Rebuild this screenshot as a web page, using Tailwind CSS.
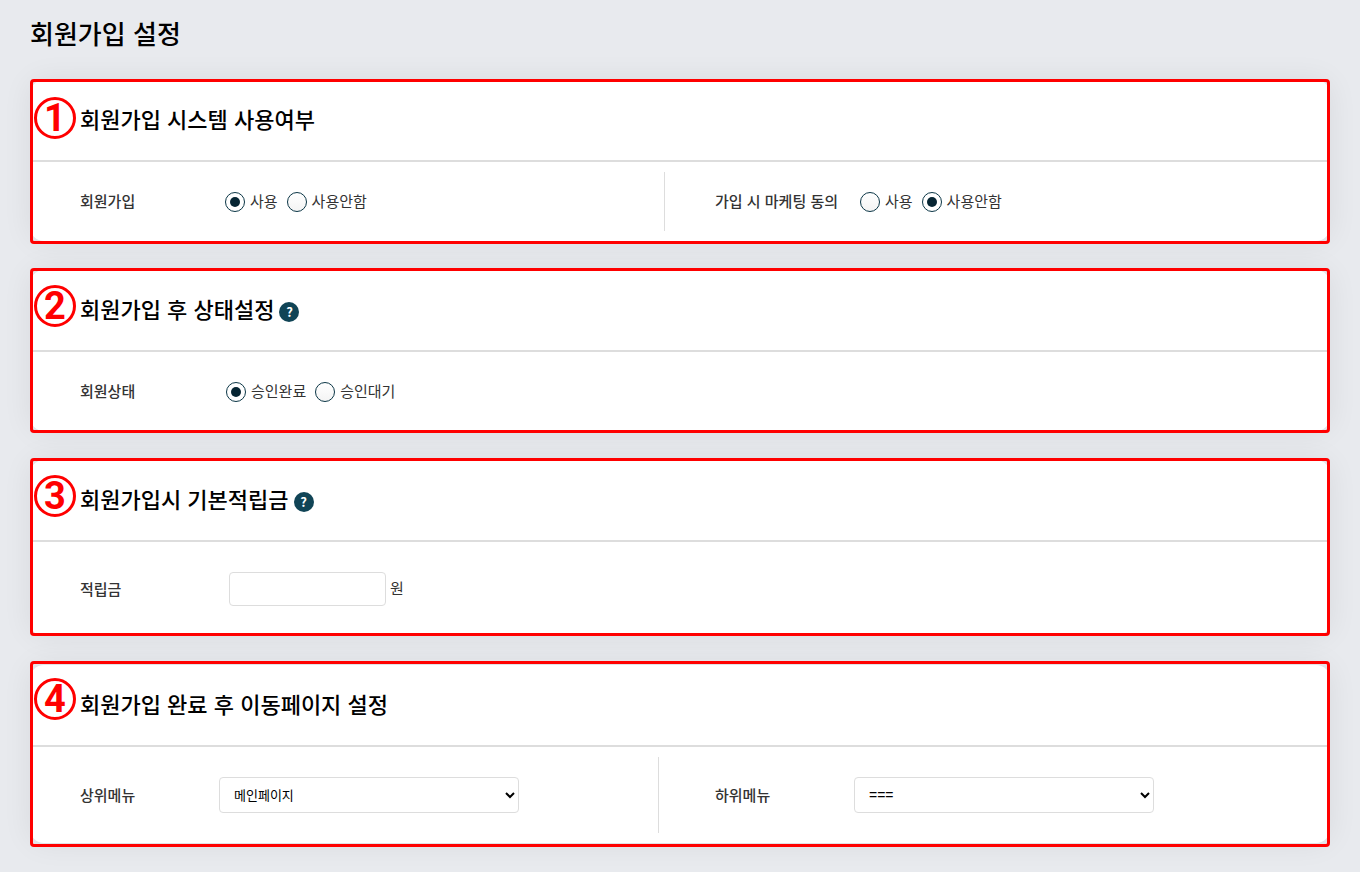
<!DOCTYPE html>
<html lang="ko">
  <head>
    <meta charset="UTF-8" />
    <meta name="viewport" content="width=device-width, initial-scale=1.0" />
    <script src="https://cdn.jsdelivr.net/npm/@tailwindcss/browser@4"></script>
    <title>회원가입 설정</title>
  </head>
  <body class="bg-[#e8eaee] font-['Noto_Sans_CJK_KR',sans-serif] text-[15px] leading-[18px] text-[#333]">
    <main class="px-[30px] pb-[25px]">
      <h1 class="flex h-20 items-start pt-[15px] text-[26px] leading-9 font-medium text-black">회원가입 설정</h1>

      <form class="flex flex-col gap-[29px]">
        <!-- 1. 시스템 사용여부 -->
        <section class="relative rounded-[14px] bg-white shadow-[0_0_30px_rgba(0,0,0,0.07)]">
          <div class="pointer-events-none absolute inset-x-0 -top-px -bottom-[3px] rounded-sm border-3 border-[#f00]"></div>
          <span class="absolute top-[17px] left-1 flex size-[42px] items-center justify-center rounded-full border-3 border-[#f00] font-[Roboto,sans-serif] text-[38px] leading-none font-bold text-[#f00]">1</span>
          <header class="flex h-[82px] items-center border-b-2 border-[#ddd] pb-1 pl-[50px]">
            <h2 class="text-[22px] leading-8 font-medium text-black">회원가입 시스템 사용여부</h2>
          </header>
          <div class="grid grid-cols-[635fr_665fr] py-[10px]">
            <div role="radiogroup" aria-labelledby="join-label" class="flex items-center border-r border-[#ddd] pt-5 pb-[19px] pl-[50px]">
              <span id="join-label" class="w-[145px] pb-0.5 font-medium">회원가입</span>
              <div class="flex gap-[9px]">
                <label class="flex items-center gap-[5px]">
                  <input type="radio" name="join" checked class="size-5 appearance-none rounded-full border border-[#0b3646] bg-linear-to-b from-white to-[#f4f4f4] checked:bg-[#062533] checked:bg-none checked:bg-clip-content checked:p-1" />
                  <span class="pb-0.5">사용</span>
                </label>
                <label class="flex items-center gap-[5px]">
                  <input type="radio" name="join" class="size-5 appearance-none rounded-full border border-[#0b3646] bg-linear-to-b from-white to-[#f4f4f4] checked:bg-[#062533] checked:bg-none checked:bg-clip-content checked:p-1" />
                  <span class="pb-0.5">사용안함</span>
                </label>
              </div>
            </div>
            <div role="radiogroup" aria-labelledby="marketing-label" class="flex items-center pt-5 pb-[19px] pl-[50px]">
              <span id="marketing-label" class="w-[145px] pb-0.5 font-medium">가입 시 마케팅 동의</span>
              <div class="flex gap-[9px]">
                <label class="flex items-center gap-[5px]">
                  <input type="radio" name="marketing" class="size-5 appearance-none rounded-full border border-[#0b3646] bg-linear-to-b from-white to-[#f4f4f4] checked:bg-[#062533] checked:bg-none checked:bg-clip-content checked:p-1" />
                  <span class="pb-0.5">사용</span>
                </label>
                <label class="flex items-center gap-[5px]">
                  <input type="radio" name="marketing" checked class="size-5 appearance-none rounded-full border border-[#0b3646] bg-linear-to-b from-white to-[#f4f4f4] checked:bg-[#062533] checked:bg-none checked:bg-clip-content checked:p-1" />
                  <span class="pb-0.5">사용안함</span>
                </label>
              </div>
            </div>
          </div>
        </section>

        <!-- 2. 가입 후 상태 -->
        <section class="relative rounded-[14px] bg-white shadow-[0_0_30px_rgba(0,0,0,0.07)]">
          <div class="pointer-events-none absolute inset-x-0 -top-0.5 -bottom-0.5 rounded-sm border-3 border-[#f00]"></div>
          <span class="absolute top-[15px] left-1 flex size-[42px] items-center justify-center rounded-full border-3 border-[#f00] font-[Roboto,sans-serif] text-[38px] leading-none font-bold text-[#f00]">2</span>
          <header class="flex h-[82px] items-center gap-[5px] border-b-2 border-[#ddd] pb-1 pl-[50px]">
            <h2 class="text-[22px] leading-8 font-medium text-black">회원가입 후 상태설정</h2>
            <button type="button" aria-label="도움말" class="mt-2 size-5 rounded-full bg-[#104456] text-[13px] leading-[18px] font-bold text-white">?</button>
          </header>
          <div role="radiogroup" aria-labelledby="status-label" class="flex items-center pt-[30px] pb-[29px] pl-[50px]">
            <span id="status-label" class="w-[146px] pb-0.5 font-medium">회원상태</span>
            <div class="flex gap-[9px]">
              <label class="flex items-center gap-[5px]">
                <input type="radio" name="status" checked class="size-5 appearance-none rounded-full border border-[#0b3646] bg-linear-to-b from-white to-[#f4f4f4] checked:bg-[#062533] checked:bg-none checked:bg-clip-content checked:p-1" />
                <span class="pb-0.5">승인완료</span>
              </label>
              <label class="flex items-center gap-[5px]">
                <input type="radio" name="status" class="size-5 appearance-none rounded-full border border-[#0b3646] bg-linear-to-b from-white to-[#f4f4f4] checked:bg-[#062533] checked:bg-none checked:bg-clip-content checked:p-1" />
                <span class="pb-0.5">승인대기</span>
              </label>
            </div>
          </div>
        </section>

        <!-- 3. 기본적립금 -->
        <section class="relative rounded-[14px] bg-white shadow-[0_0_30px_rgba(0,0,0,0.07)]">
          <div class="pointer-events-none absolute inset-x-0 -top-0.5 bottom-0 rounded-sm border-3 border-[#f00]"></div>
          <span class="absolute top-[15px] left-1 flex size-[42px] items-center justify-center rounded-full border-3 border-[#f00] font-[Roboto,sans-serif] text-[38px] leading-none font-bold text-[#f00]">3</span>
          <header class="flex h-[82px] items-center gap-[5px] border-b-2 border-[#ddd] pb-1 pl-[50px]">
            <h2 class="text-[22px] leading-8 font-medium text-black">회원가입시 기본적립금</h2>
            <button type="button" aria-label="도움말" class="mt-2 size-5 rounded-full bg-[#104456] text-[13px] leading-[18px] font-bold text-white">?</button>
          </header>
          <div class="flex items-center py-[30px] pl-[50px]">
            <label for="point" class="w-[149px] font-medium">적립금</label>
            <input id="point" type="text" class="mr-1 h-[34px] w-[157px] rounded border border-[#ddd] bg-white px-3" />
            <span class="pb-0.5">원</span>
          </div>
        </section>

        <!-- 4. 이동페이지 -->
        <section class="relative rounded-[14px] bg-white shadow-[0_0_30px_rgba(0,0,0,0.07)]">
          <div class="pointer-events-none absolute inset-x-0 -top-1 -bottom-1 rounded-sm border-3 border-[#f00]"></div>
          <span class="absolute top-[13px] left-1 flex size-[42px] items-center justify-center rounded-full border-3 border-[#f00] font-[Roboto,sans-serif] text-[38px] leading-none font-bold text-[#f00]">4</span>
          <header class="flex h-[82px] items-center border-b-2 border-[#ddd] pb-1 pl-[50px]">
            <h2 class="text-[22px] leading-8 font-medium text-black">회원가입 완료 후 이동페이지 설정</h2>
          </header>
          <div class="grid grid-cols-[635fr_665fr] py-[10px]">
            <div class="mr-1.5 flex items-center border-r border-[#ddd] py-5 pl-[50px]">
              <label for="parent-menu" class="w-[139px] font-medium">상위메뉴</label>
              <select id="parent-menu" class="h-9 w-[300px] rounded border border-[#ddd] bg-white pb-0.5 pl-2.5 text-[13px] text-black">
                <option>메인페이지</option>
              </select>
            </div>
            <div class="flex items-center py-5 pl-[50px]">
              <label for="child-menu" class="w-[139px] font-medium">하위메뉴</label>
              <select id="child-menu" class="h-9 w-[300px] rounded border border-[#ddd] bg-white pl-2.5 font-['Liberation_Sans','Noto_Sans_CJK_KR',sans-serif] text-sm text-black">
                <option>===</option>
              </select>
            </div>
          </div>
        </section>
      </form>
    </main>
  </body>
</html>
